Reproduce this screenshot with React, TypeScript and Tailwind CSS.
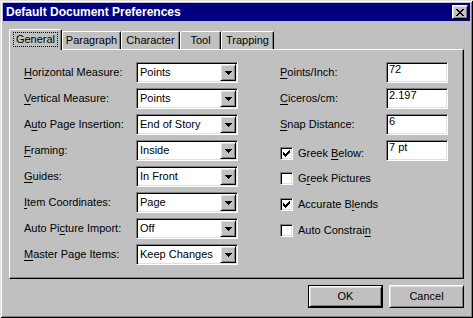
import React from "react"

// classic 3d edges
const raised =
  "border border-t-white border-l-white border-b-black border-r-black shadow-[inset_1px_1px_#dfdfdf,inset_-1px_-1px_#808080]"
const sunken =
  "border border-t-[#808080] border-l-[#808080] border-b-white border-r-white shadow-[inset_1px_1px_#000,inset_-1px_-1px_#dfdfdf]"

const Hot = ({ text, at }: { text: string; at: number }) => (
  <span className="whitespace-nowrap">
    {text.slice(0, at)}
    <span className="underline decoration-1 underline-offset-[2px]">{text[at]}</span>
    {text.slice(at + 1)}
  </span>
)

const Arrow = () => (
  <svg width="7" height="4" viewBox="0 0 7 4" shapeRendering="crispEdges">
    <path d="M0 0h7v1H0z M1 1h5v1H1z M2 2h3v1H2z M3 3h1v1H3z" fill="#000" />
  </svg>
)

const Check = () => (
  <svg width="7" height="7" viewBox="0 0 7 7" shapeRendering="crispEdges">
    <path
      d="M6 0h1v1H6z M5 1h2v1H5z M0 2h1v1H0z M4 2h3v1H4z M0 3h2v1H0z M3 3h3v1H3z M0 4h5v1H0z M1 5h3v1H1z M2 6h1v1H2z"
      fill="#000"
    />
  </svg>
)

const Select = ({ value }: { value: string }) => (
  <div className={`flex h-[21px] w-[102px] items-center bg-white p-[1px] ${sunken}`}>
    <span className="flex-1 pl-[2px] leading-[13px]">{value}</span>
    <span className={`flex h-[17px] w-[16px] items-center justify-center bg-[#c0c0c0] ${raised}`}>
      <Arrow />
    </span>
  </div>
)

const TextBox = ({ value }: { value: string }) => (
  <div className={`h-[21px] w-[62px] bg-white pl-[2px] leading-[13px] ${sunken}`}>{value}</div>
)

const CheckBox = ({ checked }: { checked: boolean }) => (
  <span className={`flex h-[13px] w-[13px] shrink-0 items-center justify-center bg-white ${sunken}`}>
    {checked && <Check />}
  </span>
)

const leftRows: [string, number, string][] = [
  ["Horizontal Measure:", 0, "Points"],
  ["Vertical Measure:", 0, "Points"],
  ["Auto Page Insertion:", 1, "End of Story"],
  ["Framing:", 0, "Inside"],
  ["Guides:", 0, "In Front"],
  ["Item Coordinates:", 0, "Page"],
  ["Auto Picture Import:", 7, "Off"],
  ["Master Page Items:", 0, "Keep Changes"],
]

const numberRows: [string, number, string][] = [
  ["Points/Inch:", 0, "72"],
  ["Ciceros/cm:", 0, "2.197"],
  ["Snap Distance:", 0, "6"],
]

const checkRows: [string, number, boolean][] = [
  ["Greek Pictures", 1, false],
  ["Accurate Blends", 10, true],
  ["Auto Constrain", 13, false],
]

const tabs = [
  { name: "Paragraph", w: "w-[59px]" },
  { name: "Character", w: "w-[59px]" },
  { name: "Tool", w: "w-[41px]" },
  { name: "Trapping", w: "w-[53px]" },
]

export default function App() {
  return (
    <div className="h-[318px] w-[473px] bg-[#c0c0c0] p-[3px] font-['Liberation_Sans',Arial,sans-serif] text-[11px] text-black shadow-[inset_1px_1px_#dfdfdf,inset_-1px_-1px_#000,inset_2px_2px_#fff,inset_-2px_-2px_#808080]">
      {/* title bar */}
      <div className="flex h-[18px] items-center justify-between bg-[#000080] pl-[3px] pr-[2px]">
        <span className="text-[12px] font-bold leading-none text-white">Default Document Preferences</span>
        <span className={`flex h-[14px] w-[16px] items-center justify-center bg-[#c0c0c0] ${raised}`}>
          <svg width="8" height="7" viewBox="0 0 8 7" shapeRendering="crispEdges">
            <path
              d="M0 0h2v1H0z M6 0h2v1H6z M1 1h2v1H1z M5 1h2v1H5z M2 2h4v1H2z M3 3h2v1H3z M2 4h4v1H2z M1 5h2v1H1z M5 5h2v1H5z M0 6h2v1H0z M6 6h2v1H6z"
              fill="#000"
            />
          </svg>
        </span>
      </div>

      <div className="px-[6px] pt-[8px]">
        {/* tabs */}
        <div className="flex h-[20px] items-end">
          <div className="relative z-10 -mb-[1px] flex h-[21px] w-[53px] items-start justify-center rounded-t-[2px] border-l border-t border-r border-l-white border-t-white border-r-black bg-[#c0c0c0] pt-[2px] shadow-[inset_-1px_0_#808080]">
            <span className="border border-dotted border-black px-[2px] leading-[13px]">General</span>
          </div>
          {tabs.map((t) => (
            <div
              key={t.name}
              className={`flex h-[18px] ${t.w} items-start justify-center rounded-t-[2px] border-l border-t border-r border-l-white border-t-white border-r-black pt-[2px] leading-[13px] shadow-[inset_-1px_0_#808080]`}
            >
              {t.name}
            </div>
          ))}
        </div>

        {/* panel */}
        <div className="flex h-[230px] gap-[42px] border border-t-white border-l-white border-b-black border-r-black pl-[14px] pt-[12px] shadow-[inset_-1px_-1px_#808080]">
          <div className="flex flex-col gap-[5px]">
            {leftRows.map(([label, at, value]) => (
              <div key={label} className="flex h-[21px] items-center">
                <span className="w-[112px]">
                  <Hot text={label} at={at} />
                </span>
                <Select value={value} />
              </div>
            ))}
          </div>

          <div className="flex flex-col gap-[5px]">
            {numberRows.map(([label, at, value]) => (
              <div key={label} className="flex h-[21px] items-center">
                <span className="w-[106px]">
                  <Hot text={label} at={at} />
                </span>
                <TextBox value={value} />
              </div>
            ))}
            <div className="flex h-[21px] items-center">
              <span className="flex w-[106px] items-center gap-[5px] pt-[5px]">
                <CheckBox checked />
                <Hot text="Greek Below:" at={6} />
              </span>
              <TextBox value="7 pt" />
            </div>
            <div className="mt-[2px] flex flex-col gap-[5px]">
              {checkRows.map(([label, at, checked]) => (
                <div key={label} className="flex h-[21px] items-center gap-[5px]">
                  <CheckBox checked={checked} />
                  <Hot text={label} at={at} />
                </div>
              ))}
            </div>
          </div>
        </div>

        {/* buttons */}
        <div className="flex justify-end gap-[6px] pt-[6px]">
          <div className="h-[23px] w-[75px] border border-black">
            <div className={`flex h-full items-center justify-center bg-[#c0c0c0] ${raised}`}>OK</div>
          </div>
          <div className={`flex h-[23px] w-[75px] items-center justify-center bg-[#c0c0c0] ${raised}`}>Cancel</div>
        </div>
      </div>
    </div>
  )
}
